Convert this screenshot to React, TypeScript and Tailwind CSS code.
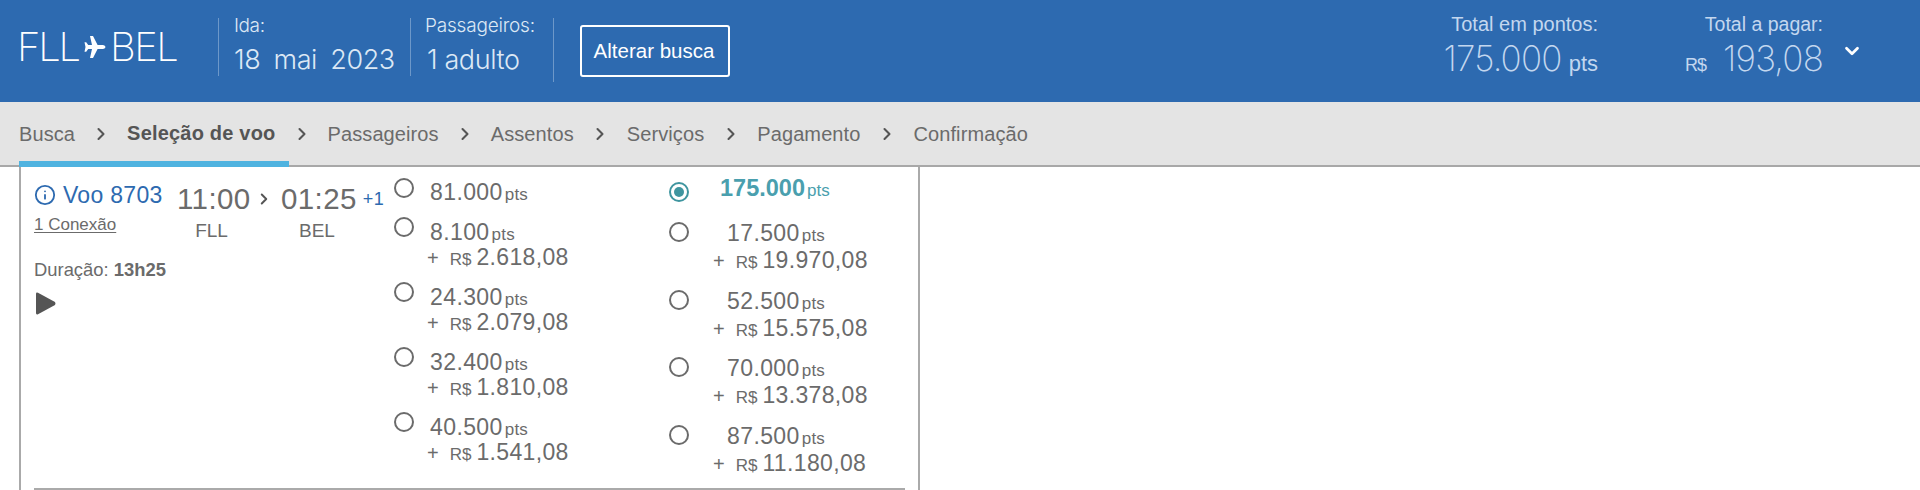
import { ChevronRight, ChevronDown, Info } from 'lucide-react';

const steps = ['Busca', 'Seleção de voo', 'Passageiros', 'Assentos', 'Serviços', 'Pagamento', 'Confirmação'];

const mixedLeft = [
  { pts: '8.100', brl: '2.618,08' },
  { pts: '24.300', brl: '2.079,08' },
  { pts: '32.400', brl: '1.810,08' },
  { pts: '40.500', brl: '1.541,08' },
];

const mixedRight = [
  { pts: '17.500', brl: '19.970,08' },
  { pts: '52.500', brl: '15.575,08' },
  { pts: '70.000', brl: '13.378,08' },
  { pts: '87.500', brl: '11.180,08' },
];

function Radio({ checked = false }: { checked?: boolean }) {
  return (
    <span
      className={`flex h-[20px] w-[20px] shrink-0 items-center justify-center rounded-full border-2 ${
        checked ? 'border-[#3f959f]' : 'border-[#6b6b6b]'
      }`}
    >
      {checked && <span className="h-[10px] w-[10px] rounded-full bg-[#3f959f]" />}
    </span>
  );
}

function Points({ value }: { value: string }) {
  return (
    <div className="flex h-[22px] items-baseline text-[23px] leading-[22px] tracking-[0.4px]">
      {value}
      <span className="ml-[2px] text-[17px] tracking-[0.2px]">pts</span>
    </div>
  );
}

function Money({ value }: { value: string }) {
  return (
    <div className="flex h-[24px] items-baseline leading-[24px]">
      <span className="text-[20px]">+</span>
      <span className="ml-[11px] text-[17px]">R$</span>
      <span className="ml-[5px] text-[23px] tracking-[0.35px]">{value}</span>
    </div>
  );
}

export default function App() {
  return (
    <div className="h-[490px] w-[1920px] overflow-hidden bg-white font-['Liberation_Sans',Arial,sans-serif] text-[#6b6b6b]">
      {/* Top summary bar */}
      <header className="flex h-[102px] items-start bg-[#2d6ab0] text-white">
        <div className="ml-[17px] mt-[27px] flex w-[201px] items-center font-['Inter',sans-serif] text-[40px] font-extralight leading-[40px]">
          <span className="tracking-[-2.2px]">FLL</span>
          <svg className="ml-[5px] mr-[4px] h-[22px] w-[22px]" viewBox="0 0 22 22" fill="currentColor">
            <path d="M21.5 11 Q21.5 12.6 19 12.9 L13.6 12.9 L9 22 L6 22 L8 12.9 L4.2 12.9 L2.2 15.8 L0.5 15.8 L1.5 11 L0.5 6.2 L2.2 6.2 L4.2 9.1 L8 9.1 L6 0 L9 0 L13.6 9.1 L19 9.1 Q21.5 9.4 21.5 11 Z" />
          </svg>
          <span className="tracking-[-1.5px]">BEL</span>
        </div>

        <div className="mt-[18px] h-[58px] w-[192px] border-l border-[#6d98c9] pl-[15px] text-[#dce8f5]">
          <div className="-mt-[2px] font-['Inter',sans-serif] text-[19px] font-light leading-[20px] tracking-[-0.4px]">Ida:</div>
          <div className="mt-[9px] font-['Inter',sans-serif] text-[27px] font-light leading-[30px] tracking-[-0.4px] [word-spacing:6px]">
            18 mai 2023
          </div>
        </div>

        <div className="mt-[18px] h-[58px] w-[143px] border-l border-[#6d98c9] pl-[14px] text-[#dce8f5]">
          <div className="-mt-[2px] font-['Inter',sans-serif] text-[19px] font-light leading-[20px] tracking-[-0.2px]">Passageiros:</div>
          <div className="mt-[9px] pl-[2px] font-['Inter',sans-serif] text-[27px] font-light leading-[30px] tracking-[-0.4px]">
            1 adulto
          </div>
        </div>

        <div className="mt-[18px] flex h-[64px] border-l border-[#6d98c9] pl-[26px]">
          <button className="mt-[7px] h-[52px] w-[150px] rounded-[3px] border-2 border-white pr-[2px] text-[20.5px] leading-none text-white">
            Alterar busca
          </button>
        </div>

        <div className="ml-auto mr-[75px] mt-[14px] flex flex-col items-end text-[#c3d7ef]">
          <div className="text-[20px] leading-[20px]">Total em pontos:</div>
          <div className="mt-[7px] flex items-baseline whitespace-nowrap">
            <span className="font-['Inter',sans-serif] text-[35px] font-extralight leading-[34px] tracking-[-0.8px]">175.000</span>
            <span className="ml-[7px] text-[22px] leading-[24px]">pts</span>
          </div>
        </div>

        <div className="mt-[14px] flex w-[150px] flex-col items-end text-[#c3d7ef]">
          <div className="text-[19.5px] leading-[20px]">Total a pagar:</div>
          <div className="mt-[7px] flex items-baseline whitespace-nowrap">
            <span className="text-[18px] tracking-[-1px]">R$</span>
            <span className="ml-[17px] font-['Inter',sans-serif] text-[35px] font-extralight leading-[34px] tracking-[-0.8px]">193,08</span>
          </div>
        </div>

        <ChevronDown className="ml-[18px] mr-[57px] mt-[40px] h-[22px] w-[22px] text-white" strokeWidth={3} />
      </header>

      {/* Checkout steps */}
      <nav className="flex h-[65px] items-start border-b-2 border-[#a8a8a8] bg-[#e4e4e4] pl-[19px] text-[20px]">
        {steps.map((step, i) => {
          const active = i === 1;
          return (
            <div key={step} className="flex h-[62px] items-start">
              {i > 0 && (
                <ChevronRight
                  className={`mt-[22px] h-[20px] w-[20px] text-[#555] ${i < 4 ? 'mx-[16px]' : 'mx-[16.5px]'}`}
                  strokeWidth={2.5}
                />
              )}
              <span
                className={`h-[24px] whitespace-nowrap leading-[24px] ${
                  active ? 'mt-[19px] font-bold tracking-[0.2px] text-[#555]' : 'mt-[20px] tracking-[0.1px] text-[#6b6b6b]'
                }`}
              >
                {step}
              </span>
            </div>
          );
        })}
      </nav>
      <div className="-mt-[6px] ml-[19px] h-[6px] w-[270px] bg-[#4fb3e0]" />

      {/* Flight card */}
      <section className="ml-[19px] h-[323px] w-[901px] border-x-2 border-[#aaa] pl-[13px]">
        <div className="flex h-[323px] w-[871px] border-b-2 border-[#aaa]">
          <div className="w-[360px] shrink-0 pt-[16px]">
            <div className="flex items-start">
              <div className="w-[143px]">
                <div className="flex h-[24px] items-center text-[23px] text-[#2d6ab0]">
                  <Info className="h-[22px] w-[22px]" strokeWidth={2} />
                  <span className="ml-[7px] tracking-[0.3px]">Voo 8703</span>
                </div>
                <div className="mt-[8px] text-[17px] leading-[20px] underline underline-offset-2">1 Conexão</div>
              </div>
              <div className="w-[105px] text-center">
                <div className="flex h-[32px] items-center text-[29.5px] tracking-[0.4px]">
                  11:00
                  <ChevronRight className="ml-[4px] h-[18px] w-[18px] text-[#555]" strokeWidth={2.6} />
                </div>
                <div className="mt-[5px] pr-[36px] text-[19px] leading-[22px]">FLL</div>
              </div>
              <div className="-ml-[1px] w-[105px]">
                <div className="flex h-[32px] items-center text-[29.5px] tracking-[0.4px]">
                  01:25
                  <span className="ml-[6px] text-[18px] text-[#2d6ab0]">+1</span>
                </div>
                <div className="mt-[5px] pl-[18px] text-[19px] leading-[22px]">BEL</div>
              </div>
            </div>
            <div className="mt-[18px] text-[18.4px] leading-[20px]">
              Duração: <b>13h25</b>
            </div>
            <svg className="ml-[2px] mt-[12px] h-[23px] w-[20px]" viewBox="0 0 20 23" fill="#555">
              <path d="M0 2 Q0 0 2 0.8 L19 10 Q20 11.5 19 13 L2 22.2 Q0 23 0 21 Z" />
            </svg>
          </div>

          {/* Points only / points + money, first fare */}
          <div className="w-[275px] shrink-0 pt-[11px]">
            <div className="flex h-[39px]">
              <Radio />
              <div className="ml-[16px] mt-[3px]">
                <Points value="81.000" />
              </div>
            </div>
            {mixedLeft.map((row) => (
              <div key={row.pts} className="flex h-[65px]">
                <Radio />
                <div className="ml-[13px]">
                  <div className="ml-[3px] mt-[4px]">
                    <Points value={row.pts} />
                  </div>
                  <div className="mt-[2px]">
                    <Money value={row.brl} />
                  </div>
                </div>
              </div>
            ))}
          </div>

          {/* Second fare */}
          <div className="flex-1 pt-[15px]">
            <div className="flex h-[40px]">
              <Radio checked />
              <div className="ml-[31px] -mt-[5px] text-[#4a9fae]">
                <div className="flex h-[22px] items-baseline text-[23.5px] font-bold leading-[22px]">
                  175.000
                  <span className="ml-[2px] text-[17px] font-normal">pts</span>
                </div>
              </div>
            </div>
            {mixedRight.map((row) => (
              <div key={row.pts} className="flex h-[67.5px]">
                <Radio />
                <div className="ml-[24px]">
                  <div className="ml-[14px]">
                    <Points value={row.pts} />
                  </div>
                  <div className="mt-[4px]">
                    <Money value={row.brl} />
                  </div>
                </div>
              </div>
            ))}
          </div>
        </div>
      </section>
    </div>
  );
}
